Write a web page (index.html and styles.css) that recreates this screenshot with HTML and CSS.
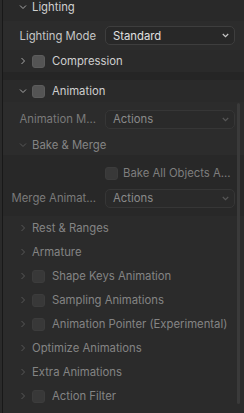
FILE: index.html
```html
<!DOCTYPE html>
<html lang="en">
<head>
  <meta charset="UTF-8">
  <meta name="viewport" content="width=device-width, initial-scale=1.0">
  <title>Export Settings</title>
  <link rel="stylesheet" href="styles.css">
</head>
<body>
  <div class="editor">

    <!-- Lighting -->
    <section class="panel">
      <div class="head head-top">
        <svg class="chev" width="8" height="8" viewBox="0 0 8 8"><polyline points="1,2.5 4,5.5 7,2.5"/></svg>
        <span>Lighting</span>
      </div>
      <div class="body">
        <div class="prop">
          <span class="lbl">Lighting Mode</span>
          <div class="select"><span>Standard</span><svg width="7" height="5" viewBox="0 0 7 5"><polyline points="0.8,1 3.5,3.7 6.2,1"/></svg></div>
        </div>
      </div>
    </section>

    <!-- Compression -->
    <section class="panel">
      <div class="head head-comp">
        <svg class="chev" width="8" height="8" viewBox="0 0 8 8"><polyline points="2.5,1 5.5,4 2.5,7"/></svg>
        <span class="check"></span>
        <span>Compression</span>
      </div>
    </section>

    <div class="gap"></div>

    <!-- Animation -->
    <section class="panel">
      <div class="head head-anim">
        <svg class="chev" width="8" height="8" viewBox="0 0 8 8"><polyline points="1,2.5 4,5.5 7,2.5"/></svg>
        <span class="check"></span>
        <span>Animation</span>
      </div>
      <div class="body dim">
        <div class="scrollbar"></div>

        <div class="anim-top">
          <div class="prop">
            <span class="lbl">Animation M...</span>
            <div class="select"><span>Actions</span><svg width="7" height="5" viewBox="0 0 7 5"><polyline points="0.8,1 3.5,3.7 6.2,1"/></svg></div>
          </div>
          <div class="sub-head">
            <svg class="chev" width="8" height="8" viewBox="0 0 8 8"><polyline points="1,2.5 4,5.5 7,2.5"/></svg>
            <span>Bake &amp; Merge</span>
          </div>
        </div>

        <div class="bake">
          <div class="prop">
            <span class="lbl"></span>
            <div class="check-opt"><span class="check"></span><span>Bake All Objects A...</span></div>
          </div>
          <div class="prop">
            <span class="lbl">Merge Animat...</span>
            <div class="select"><span>Actions</span><svg width="7" height="5" viewBox="0 0 7 5"><polyline points="0.8,1 3.5,3.7 6.2,1"/></svg></div>
          </div>
        </div>

        <div class="subs">
          <div class="sub-head">
            <svg class="chev" width="8" height="8" viewBox="0 0 8 8"><polyline points="2.5,1 5.5,4 2.5,7"/></svg>
            <span>Rest &amp; Ranges</span>
          </div>
          <div class="sub-head">
            <svg class="chev" width="8" height="8" viewBox="0 0 8 8"><polyline points="2.5,1 5.5,4 2.5,7"/></svg>
            <span>Armature</span>
          </div>
          <div class="sub-head">
            <svg class="chev" width="8" height="8" viewBox="0 0 8 8"><polyline points="2.5,1 5.5,4 2.5,7"/></svg>
            <span class="check"></span>
            <span>Shape Keys Animation</span>
          </div>
          <div class="sub-head">
            <svg class="chev" width="8" height="8" viewBox="0 0 8 8"><polyline points="2.5,1 5.5,4 2.5,7"/></svg>
            <span class="check"></span>
            <span>Sampling Animations</span>
          </div>
          <div class="sub-head">
            <svg class="chev" width="8" height="8" viewBox="0 0 8 8"><polyline points="2.5,1 5.5,4 2.5,7"/></svg>
            <span class="check"></span>
            <span>Animation Pointer (Experimental)</span>
          </div>
          <div class="sub-head">
            <svg class="chev" width="8" height="8" viewBox="0 0 8 8"><polyline points="2.5,1 5.5,4 2.5,7"/></svg>
            <span>Optimize Animations</span>
          </div>
          <div class="sub-head">
            <svg class="chev" width="8" height="8" viewBox="0 0 8 8"><polyline points="2.5,1 5.5,4 2.5,7"/></svg>
            <span>Extra Animations</span>
          </div>
          <div class="sub-head">
            <svg class="chev" width="8" height="8" viewBox="0 0 8 8"><polyline points="2.5,1 5.5,4 2.5,7"/></svg>
            <span class="check"></span>
            <span>Action Filter</span>
          </div>
        </div>
      </div>
    </section>

  </div>
</body>
</html>
```

FILE: styles.css
```css
html, body {
  margin: 0;
  padding: 0;
}
body {
  font-family: Inter, "Noto Sans", sans-serif;
  font-size: 11.3px;
  background-color: #2a2a2a;
  color: #cfcfcf;
  width: 244px;
  height: 413px;
  overflow: hidden;
}
.editor {
  margin-left: 2px;
  border-left: 1px solid #181818;
  background-color: #252525;
  height: 413px;
}
.head {
  display: flex;
  align-items: center;
  padding-left: 16px;
  white-space: nowrap;
}
.head-top {
  height: 21px;
  align-items: flex-start;
  line-height: 15px;
  background-color: #292929;
}
.head-top .chev {
  margin-top: 3px;
}
.head-comp {
  height: 22px;
  background-color: #2a2a2a;
}
.head-anim {
  height: 22px;
  background-color: #2a2a2a;
}
.gap {
  height: 8px;
}
.chev {
  flex: none;
  margin-right: 5px;
  fill: none;
  stroke: #a8a8a8;
  stroke-width: 1;
}
.check {
  flex: none;
  width: 13px;
  height: 13px;
  box-sizing: border-box;
  border-radius: 3px;
  background-color: #545454;
  border: 1px solid #5c5c5c;
  margin-right: 7px;
}
.body {
  background-color: #2c2c2c;
  padding: 0 9px 0 0;
}
.prop {
  display: grid;
  grid-template-columns: 1fr 130px;
  column-gap: 9px;
  align-items: center;
  height: 29px;
  white-space: nowrap;
}
.lbl {
  text-align: right;
  color: #c6c6c6;
  overflow: hidden;
}
.select {
  height: 19px;
  box-sizing: border-box;
  border: 1px solid #3e3e3e;
  border-radius: 5px;
  background-color: #282828;
  display: flex;
  align-items: center;
  justify-content: space-between;
  padding: 0 5px 0 7px;
  color: #e0e0e0;
}
.select svg {
  fill: none;
  stroke: #c8c8c8;
  stroke-width: 1.2;
}

/* disabled animation settings */
.dim {
  position: relative;
  padding: 0;
  height: 311px;
  color: #7e7e7e;
}
.dim .lbl {
  color: #7a7a7a;
}
.dim .select {
  color: #8a8a8a;
  border-color: #363636;
  background-color: #2a2a2a;
}
.dim .select svg,
.dim .chev {
  stroke: #575757;
}
.dim .check {
  background-color: #383838;
  border-color: #3c3c3c;
}
.dim .prop {
  padding-right: 9px;
}
.scrollbar {
  position: absolute;
  right: 4px;
  top: 1px;
  width: 3px;
  height: 301px;
  border-radius: 2px;
  background-color: #3a3a3a;
}
.anim-top {
  background-color: #2c2c2c;
  padding-top: 2px;
}
.anim-top .prop {
  height: 30px;
}
.sub-head {
  display: flex;
  align-items: center;
  height: 24px;
  padding-left: 16px;
  white-space: nowrap;
  color: #848484;
}
.anim-top .sub-head {
  height: 21px;
}
.bake {
  background-color: #282828;
  padding: 6px 0 6px;
}
.bake .prop {
  height: 24px;
}
.bake .prop + .prop {
  margin-top: 1px;
}
.check-opt {
  display: flex;
  align-items: center;
}
.check-opt .check {
  margin-right: 5px;
}
.subs {
  background-color: #2b2b2b;
  padding-top: 0;
  height: 200px;
}
```
